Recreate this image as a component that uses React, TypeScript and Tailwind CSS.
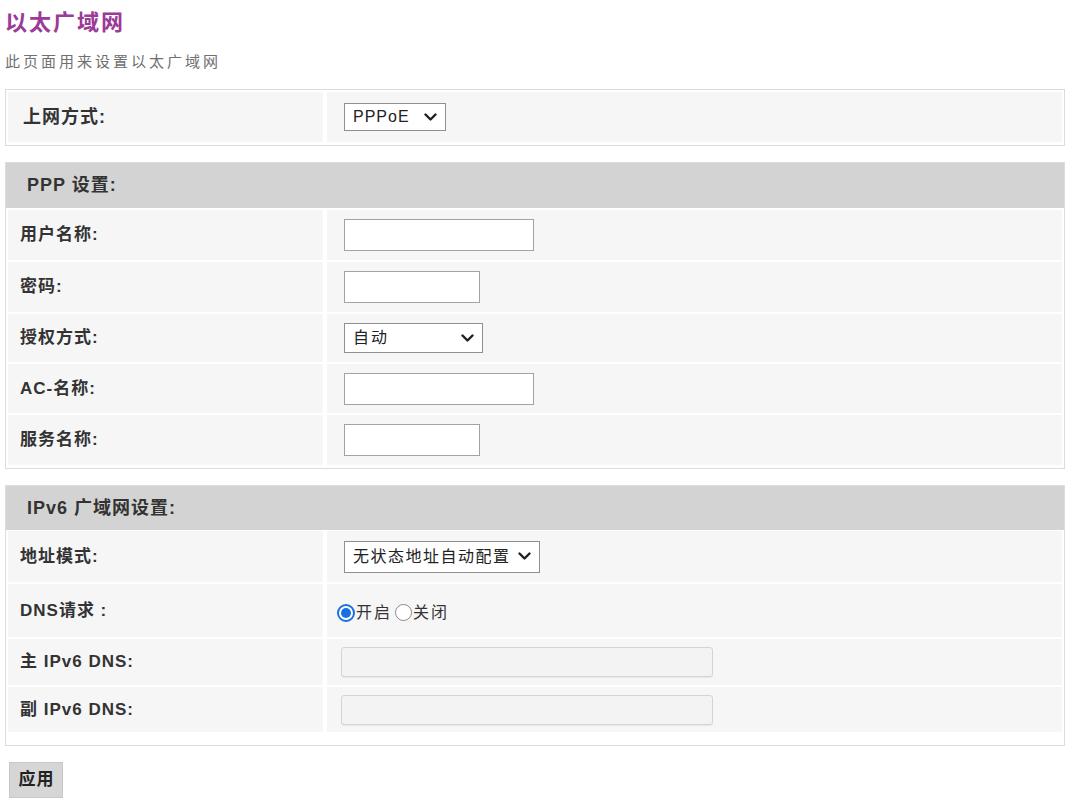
import { ReactNode } from 'react';

function Chevron() {
  return (
    <svg width="13" height="9" viewBox="0 0 13 9" className="shrink-0">
      <path d="M1.5 1.5 L6.5 6.5 L11.5 1.5" fill="none" stroke="#1f1f1f" strokeWidth="2.4" strokeLinecap="round" strokeLinejoin="round" />
    </svg>
  );
}

function FakeSelect({ value, className }: { value: string; className: string }) {
  return (
    <div className={`flex items-center justify-between border border-[#8f8f8f] bg-white pl-[8px] pr-[8px] text-[16px] font-normal text-[#222] ${className}`}>
      <span className="overflow-hidden whitespace-nowrap">{value}</span>
      <Chevron />
    </div>
  );
}

function TextBox({ className }: { className: string }) {
  return <div className={`border border-[#a3a3a3] bg-white ${className}`} />;
}

function DisabledBox() {
  return <div className="h-[30px] w-[372px] rounded-[3px] border border-[#d4d4d4] bg-[#f3f3f3] shadow-[0_1px_1px_rgba(0,0,0,0.06)]" />;
}

function Row({
  label,
  children,
  h,
  padLabel = 'pl-[12px] text-[17px]',
  padValue = 'pl-[17px]',
}: {
  label: string;
  children: ReactNode;
  h: string;
  padLabel?: string;
  padValue?: string;
}) {
  return (
    <div className={`grid grid-cols-[315px_1fr] gap-[4px] ${h}`}>
      <div className={`flex items-center whitespace-nowrap bg-[#f6f6f7] ${padLabel} font-bold tracking-[1px] text-[#333]`}>{label}</div>
      <div className={`flex items-center bg-[#f6f6f7] ${padValue}`}>{children}</div>
    </div>
  );
}

function Radio({ checked }: { checked?: boolean }) {
  return checked ? (
    <span className="flex h-[18px] w-[18px] items-center justify-center rounded-full border-[2px] border-[#1a6fe0] bg-white">
      <span className="h-[10px] w-[10px] rounded-full bg-[#1a6fe0]" />
    </span>
  ) : (
    <span className="h-[17px] w-[17px] rounded-full border border-[#8a8a8a] bg-white" />
  );
}

export default function App() {
  return (
    <div className="min-h-[802px] w-[1080px] bg-white pl-[5px] font-['Liberation_Sans','Noto_Sans_CJK_SC',sans-serif] text-[#333]">
      <h1 className="pt-[6px] font-['Noto_Sans_CJK_SC',sans-serif] text-[22px] font-bold leading-[28px] tracking-[2px] text-[#9b3a97]">以太广域网</h1>
      <p className="mt-[18px] font-['Noto_Sans_CJK_SC',sans-serif] text-[15px] leading-[18px] tracking-[3px] text-[#707070]">此页面用来设置以太广域网</p>

      <div className="mt-[19px] w-[1060px] border border-[#dcdcdc] px-[2px] pb-[3px] pt-[2px]">
        <Row label="上网方式:" h="h-[50px]" padLabel="pl-[15px] text-[18px]">
          <FakeSelect value="PPPoE" className="h-[28px] w-[102px] tracking-[1px]" />
        </Row>
      </div>

      <div className="mt-[16px] w-[1060px] border border-[#dcdcdc]">
        <div className="flex h-[45px] items-center bg-[#d3d3d3] pl-[21px] text-[18px] font-bold tracking-[1px] text-[#333]">PPP 设置:</div>
        <div className="flex flex-col gap-[2px] px-[2px] pb-[3px] pt-[2px]">
          <Row label="用户名称:" h="h-[50px]">
            <TextBox className="h-[32px] w-[190px]" />
          </Row>
          <Row label="密码:" h="h-[50px]">
            <TextBox className="h-[32px] w-[136px]" />
          </Row>
          <Row label="授权方式:" h="h-[48px]">
            <FakeSelect value="自动" className="h-[30px] w-[139px] tracking-[2px]" />
          </Row>
          <Row label="AC-名称:" h="h-[49px]">
            <TextBox className="h-[32px] w-[190px]" />
          </Row>
          <Row label="服务名称:" h="h-[50px]">
            <TextBox className="h-[32px] w-[136px]" />
          </Row>
        </div>
      </div>

      <div className="mt-[16px] w-[1060px] border border-[#dcdcdc]">
        <div className="flex h-[44px] items-center bg-[#d3d3d3] pl-[21px] text-[18px] font-bold tracking-[1px] text-[#333]">IPv6 广域网设置:</div>
        <div className="flex flex-col gap-[2px] px-[2px] pb-[13px] pt-[1px]">
          <Row label="地址模式:" h="h-[51px]">
            <FakeSelect value="无状态地址自动配置" className="h-[32px] w-[196px] tracking-[1.5px]" />
          </Row>
          <Row label="DNS请求 :" h="h-[53px]" padValue="pl-[10px]">
            <div className="flex items-center pt-[4px] text-[16px] tracking-[2px] text-[#333]">
              <Radio checked />
              <span className="ml-[1px]">开启</span>
              <span className="ml-[3px]" />
              <Radio />
              <span className="ml-[1px]">关闭</span>
            </div>
          </Row>
          <Row label="主 IPv6 DNS:" h="h-[46px]" padValue="pl-[14px]">
            <DisabledBox />
          </Row>
          <Row label="副 IPv6 DNS:" h="h-[45px]" padValue="pl-[14px]">
            <DisabledBox />
          </Row>
        </div>
      </div>

      <button className="ml-[4px] mt-[16px] flex h-[36px] w-[54px] items-center justify-center border border-[#c8c8c8] bg-[#d6d6d6] pl-[1px] text-[17px] font-bold tracking-[1px] text-[#222]">
        应用
      </button>
    </div>
  );
}
